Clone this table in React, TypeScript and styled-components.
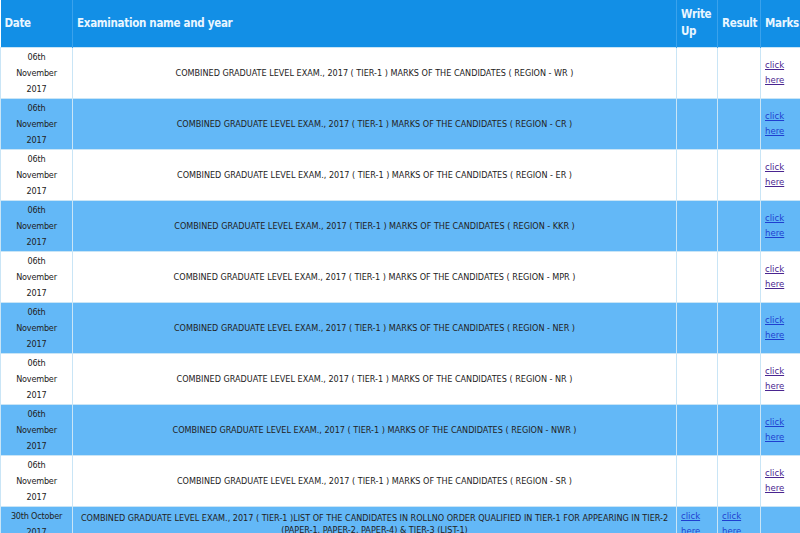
import React from "react";
import styled, { createGlobalStyle } from "styled-components";

const Global = createGlobalStyle`
  html, body { margin: 0; padding: 0; background: #ffffff; }
  body { font-family: "DejaVu Sans Condensed", "Liberation Sans Narrow", "Liberation Sans", sans-serif; }
`;

const Table = styled.table`
  width: 800px;
  border-collapse: collapse;
  table-layout: fixed;
  font-family: "DejaVu Sans Condensed", "Liberation Sans Narrow", "Liberation Sans", sans-serif;
`;

const HeadCell = styled.th<{ $w: number }>`
  width: ${(p) => p.$w}px;
  height: 47px;
  box-sizing: border-box;
  background: #128fe6;
  color: #e9f6ff;
  font-size: 11.5px;
  font-weight: 600;
  letter-spacing: -0.3px;
  text-align: left;
  padding: 0 3px 0 4px;
  line-height: 17px;
  border-right: 1px solid #3aa2ec;
  vertical-align: middle;
`;

const Row = styled.tr<{ $alt: boolean }>`
  background: ${(p) => (p.$alt ? "#63b8f7" : "#ffffff")};
`;

const Cell = styled.td`
  box-sizing: border-box;
  border: 1px solid #c9e5f6;
  font-size: 9px;
  line-height: 16px;
  color: #222;
  text-align: center;
  vertical-align: middle;
  padding: 1px 3px;
`;

const DateCell = styled(Cell)`
  padding: 1px 2px;
  letter-spacing: -0.2px;
`;

const ExamCell = styled(Cell)`
  line-height: 12px;
`;

const Link = styled.a<{ $alt: boolean }>`
  color: ${(p) => (p.$alt ? "#1f3fd0" : "#4a2590")};
  text-decoration: underline;
  font-size: 9.5px;
  line-height: 15px;
  display: inline-block;
`;

const LinkCell = styled(Cell)`
  text-align: left;
  padding: 1px 4px;
`;

type Item = {
  date: string[];
  exam: string[];
  write?: boolean;
  result?: boolean;
  marks?: boolean;
};

const regions = ["WR", "CR", "ER", "KKR", "MPR", "NER", "NR", "NWR", "SR"];

const items: Item[] = [
  ...regions.map((r) => ({
    date: ["06th", "November", "2017"],
    exam: [`COMBINED GRADUATE LEVEL EXAM., 2017 ( TIER-1 ) MARKS OF THE CANDIDATES ( REGION - ${r} )`],
    marks: true,
  })),
  {
    date: ["30th October", "2017"],
    exam: [
      "COMBINED GRADUATE LEVEL EXAM., 2017 ( TIER-1 )LIST OF THE CANDIDATES IN ROLLNO ORDER QUALIFIED IN TIER-1 FOR APPEARING IN TIER-2",
      "(PAPER-1, PAPER-2, PAPER-4) & TIER-3 (LIST-1)",
    ],
    write: true,
    result: true,
  },
];

const Lines = ({ lines }: { lines: string[] }) => (
  <>
    {lines.map((line, j) => (
      <React.Fragment key={j}>
        {j > 0 && <br />}
        {line}
      </React.Fragment>
    ))}
  </>
);

const ClickHere = ({ alt }: { alt: boolean }) => (
  <Link href="#" $alt={alt}>
    click
    <br />
    here
  </Link>
);

export default function App() {
  return (
    <>
      <Global />
      <Table>
        <thead>
          <tr>
            <HeadCell $w={72}>Date</HeadCell>
            <HeadCell $w={604}>Examination name and year</HeadCell>
            <HeadCell $w={41}>Write Up</HeadCell>
            <HeadCell $w={43}>Result</HeadCell>
            <HeadCell $w={40}>Marks</HeadCell>
          </tr>
        </thead>
        <tbody>
          {items.map((it, i) => {
            const alt = i % 2 === 1;
            return (
              <Row key={i} $alt={alt}>
                <DateCell>
                  <Lines lines={it.date} />
                </DateCell>
                <ExamCell>
                  <Lines lines={it.exam} />
                </ExamCell>
                <LinkCell>{it.write && <ClickHere alt={alt} />}</LinkCell>
                <LinkCell>{it.result && <ClickHere alt={alt} />}</LinkCell>
                <LinkCell>{it.marks && <ClickHere alt={alt} />}</LinkCell>
              </Row>
            );
          })}
        </tbody>
      </Table>
    </>
  );
}
